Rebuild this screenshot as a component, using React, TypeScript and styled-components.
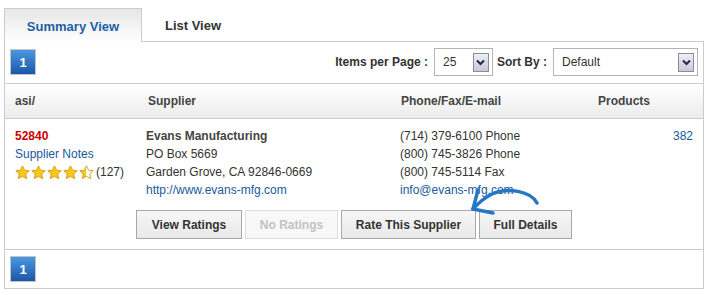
import styled, { createGlobalStyle } from 'styled-components';

const GlobalStyle = createGlobalStyle`
  body {
    margin: 0;
    background: #ffffff;
    font-family: "Liberation Sans", Arial, sans-serif;
    font-size: 12px;
    color: #333333;
  }
`;

function Star({ fill }: { fill: 'full' | 'half' | 'empty' }) {
  const id = `g-${fill}`;
  return (
    <svg width="15" height="15" viewBox="0 0 20 20">
      <defs>
        <linearGradient id={id} x1="0" x2="1" y1="0" y2="0">
          {fill === 'half' ? (
            <>
              <stop offset="0.5" stopColor="#f7c81c" />
              <stop offset="0.5" stopColor="#ffffff" />
            </>
          ) : (
            <stop offset="1" stopColor={fill === 'full' ? '#f7c81c' : '#ffffff'} />
          )}
        </linearGradient>
      </defs>
      <path
        d="M10 1.2l2.7 5.7 6.2.8-4.6 4.3 1.2 6.2L10 15.1 4.5 18.2l1.2-6.2L1.1 7.7l6.2-.8z"
        fill={`url(#${id})`}
        stroke={fill === 'empty' ? '#b8b8b8' : '#d89a0c'}
        strokeWidth="1.2"
        strokeLinejoin="round"
      />
    </svg>
  );
}

function Chevron() {
  return (
    <svg width="9" height="7" viewBox="0 0 9 7">
      <path d="M1 1.5l3.5 3.5L8 1.5" fill="none" stroke="#1e2a44" strokeWidth="2" />
    </svg>
  );
}

function Select({ value, width }: { value: string; width: number }) {
  return (
    <SelectBox $width={width}>
      <span>{value}</span>
      <SelectArrow>
        <Chevron />
      </SelectArrow>
    </SelectBox>
  );
}

export default function App() {
  return (
    <>
      <GlobalStyle />
      <Page>
        <Tabs>
          <Tab $active>Summary View</Tab>
          <Tab>List View</Tab>
          <TabFill />
        </Tabs>
        <Panel>
          <Toolbar>
            <PageButton>1</PageButton>
            <Controls>
              <Label>Items per Page :</Label>
              <Select value="25" width={59} />
              <Label>Sort By :</Label>
              <Select value="Default" width={145} />
            </Controls>
          </Toolbar>
          <HeaderRow>
            <HeadCell>asi/</HeadCell>
            <HeadCell>Supplier</HeadCell>
            <HeadCell>Phone/Fax/E-mail</HeadCell>
            <HeadCell>Products</HeadCell>
          </HeaderRow>
          <Result>
            <ResultGrid>
              <Cell>
                <AsiNumber>52840</AsiNumber>
                <Link>Supplier Notes</Link>
                <Stars>
                  <Star fill="full" />
                  <Star fill="full" />
                  <Star fill="full" />
                  <Star fill="full" />
                  <Star fill="half" />
                  <Count>(127)</Count>
                </Stars>
              </Cell>
              <Cell>
                <Name>Evans Manufacturing</Name>
                <Line>PO Box 5669</Line>
                <Line>Garden Grove, CA 92846-0669</Line>
                <Link>http://www.evans-mfg.com</Link>
              </Cell>
              <Cell>
                <Line>(714) 379-6100 Phone</Line>
                <Line>(800) 745-3826 Phone</Line>
                <Line>(800) 745-5114 Fax</Line>
                <Link>info@evans-mfg.com</Link>
              </Cell>
              <ProductCell>
                <Link>382</Link>
              </ProductCell>
            </ResultGrid>
            <Actions>
              <ActionButton $width={106}>View Ratings</ActionButton>
              <ActionButton $width={93} $disabled>
                No Ratings
              </ActionButton>
              <ActionButton $width={135}>Rate This Supplier</ActionButton>
              <ActionButton $width={93}>Full Details</ActionButton>
            </Actions>
          </Result>
          <Footer>
            <PageButton>1</PageButton>
          </Footer>
        </Panel>
        <Arrow width="80" height="36" viewBox="0 0 80 36">
          <path
            d="M72 18 C66 6 42 2 27 9 Q17 14 8 24"
            fill="none"
            stroke="#2577c4"
            strokeWidth="3.5"
            strokeLinecap="round"
          />
          <path
            d="M13 5 L8 24 L28 28"
            fill="none"
            stroke="#2577c4"
            strokeWidth="3.5"
            strokeLinecap="round"
            strokeLinejoin="round"
          />
        </Arrow>
      </Page>
    </>
  );
}

const Page = styled.div`
  position: relative;
  width: 700px;
  padding: 8px 0 0 4px;
`;

const Tabs = styled.div`
  display: flex;
  height: 34px;
`;

const Tab = styled.div<{ $active?: boolean }>`
  box-sizing: border-box;
  width: ${(p) => (p.$active ? '138px' : '102px')};
  display: flex;
  align-items: center;
  justify-content: center;
  font-size: 13px;
  font-weight: bold;
  color: ${(p) => (p.$active ? '#1d5fa5' : '#333333')};
  border: ${(p) => (p.$active ? '1px solid #cccccc' : 'none')};
  border-bottom: ${(p) => (p.$active ? 'none' : '1px solid #cccccc')};
  background: ${(p) => (p.$active ? 'linear-gradient(#e6e6e6, #ffffff)' : '#ffffff')};
  padding-top: 2px;
`;

const TabFill = styled.div`
  flex: 1;
  border-bottom: 1px solid #cccccc;
`;

const Panel = styled.div`
  border: 1px solid #cccccc;
  border-top: none;
`;

const Toolbar = styled.div`
  display: flex;
  align-items: center;
  justify-content: space-between;
  padding: 6px 5px 7px 5px;
  border-bottom: 1px solid #cccccc;
`;

const PageButton = styled.div`
  box-sizing: border-box;
  width: 26px;
  height: 26px;
  border: 1px solid #c4c4c4;
  background: linear-gradient(#4a98e4, #1a57a6);
  color: #ffffff;
  font-weight: bold;
  font-size: 13px;
  display: flex;
  align-items: center;
  justify-content: center;
`;

const Controls = styled.div`
  display: flex;
  align-items: center;
`;

const Label = styled.span`
  font-weight: bold;
  color: #333333;
  margin: 0 6px 0 4px;
`;

const SelectBox = styled.div<{ $width: number }>`
  box-sizing: border-box;
  width: ${(p) => p.$width}px;
  height: 28px;
  border: 1px solid #b4b4b4;
  background: #ffffff;
  display: flex;
  align-items: center;
  justify-content: space-between;
  padding: 0 3px 0 8px;
  color: #333333;
`;

const SelectArrow = styled.div`
  box-sizing: border-box;
  width: 16px;
  height: 19px;
  border: 1px solid #8c8c98;
  background: linear-gradient(#eeeef6, #c8c8da);
  display: flex;
  align-items: center;
  justify-content: center;
`;

const HeaderRow = styled.div`
  display: grid;
  grid-template-columns: 133px 253px 197px 1fr;
  height: 34px;
  align-items: center;
  padding-left: 10px;
  background: linear-gradient(#ffffff, #ececec);
  border-bottom: 1px solid #cccccc;
`;

const HeadCell = styled.div`
  font-weight: bold;
  color: #444444;
`;

const Result = styled.div`
  padding: 8px 0 10px;
  border-bottom: 1px solid #cccccc;
`;

const ResultGrid = styled.div`
  display: grid;
  grid-template-columns: 131px 254px 1fr 100px;
  padding: 0 10px 0 10px;
  line-height: 18px;
`;

const Cell = styled.div`
  display: flex;
  flex-direction: column;
`;

const ProductCell = styled.div`
  text-align: right;
`;

const AsiNumber = styled.div`
  font-weight: bold;
  color: #cc0000;
`;

const Link = styled.div`
  color: #1a5a9a;
`;

const Name = styled.div`
  font-weight: bold;
  color: #444444;
`;

const Line = styled.div`
  color: #333333;
`;

const Stars = styled.div`
  display: flex;
  align-items: center;
  gap: 1px;
  height: 18px;
`;

const Count = styled.span`
  margin-left: 1px;
  color: #333333;
`;

const Actions = styled.div`
  display: flex;
  justify-content: center;
  gap: 3px;
  margin-top: 11px;
`;

const ActionButton = styled.div<{ $width: number; $disabled?: boolean }>`
  box-sizing: border-box;
  width: ${(p) => p.$width}px;
  height: 29px;
  display: flex;
  align-items: center;
  justify-content: center;
  font-weight: bold;
  color: ${(p) => (p.$disabled ? '#c2c2c2' : '#333333')};
  border: 1px solid ${(p) => (p.$disabled ? '#dddddd' : '#a8a8a8')};
  background: ${(p) => (p.$disabled ? '#f8f8f8' : 'linear-gradient(#f6f6f6, #e9e9e9)')};
`;

const Footer = styled.div`
  padding: 6px 5px 6px;
`;

const Arrow = styled.svg`
  position: absolute;
  left: 465px;
  top: 185px;
`;
